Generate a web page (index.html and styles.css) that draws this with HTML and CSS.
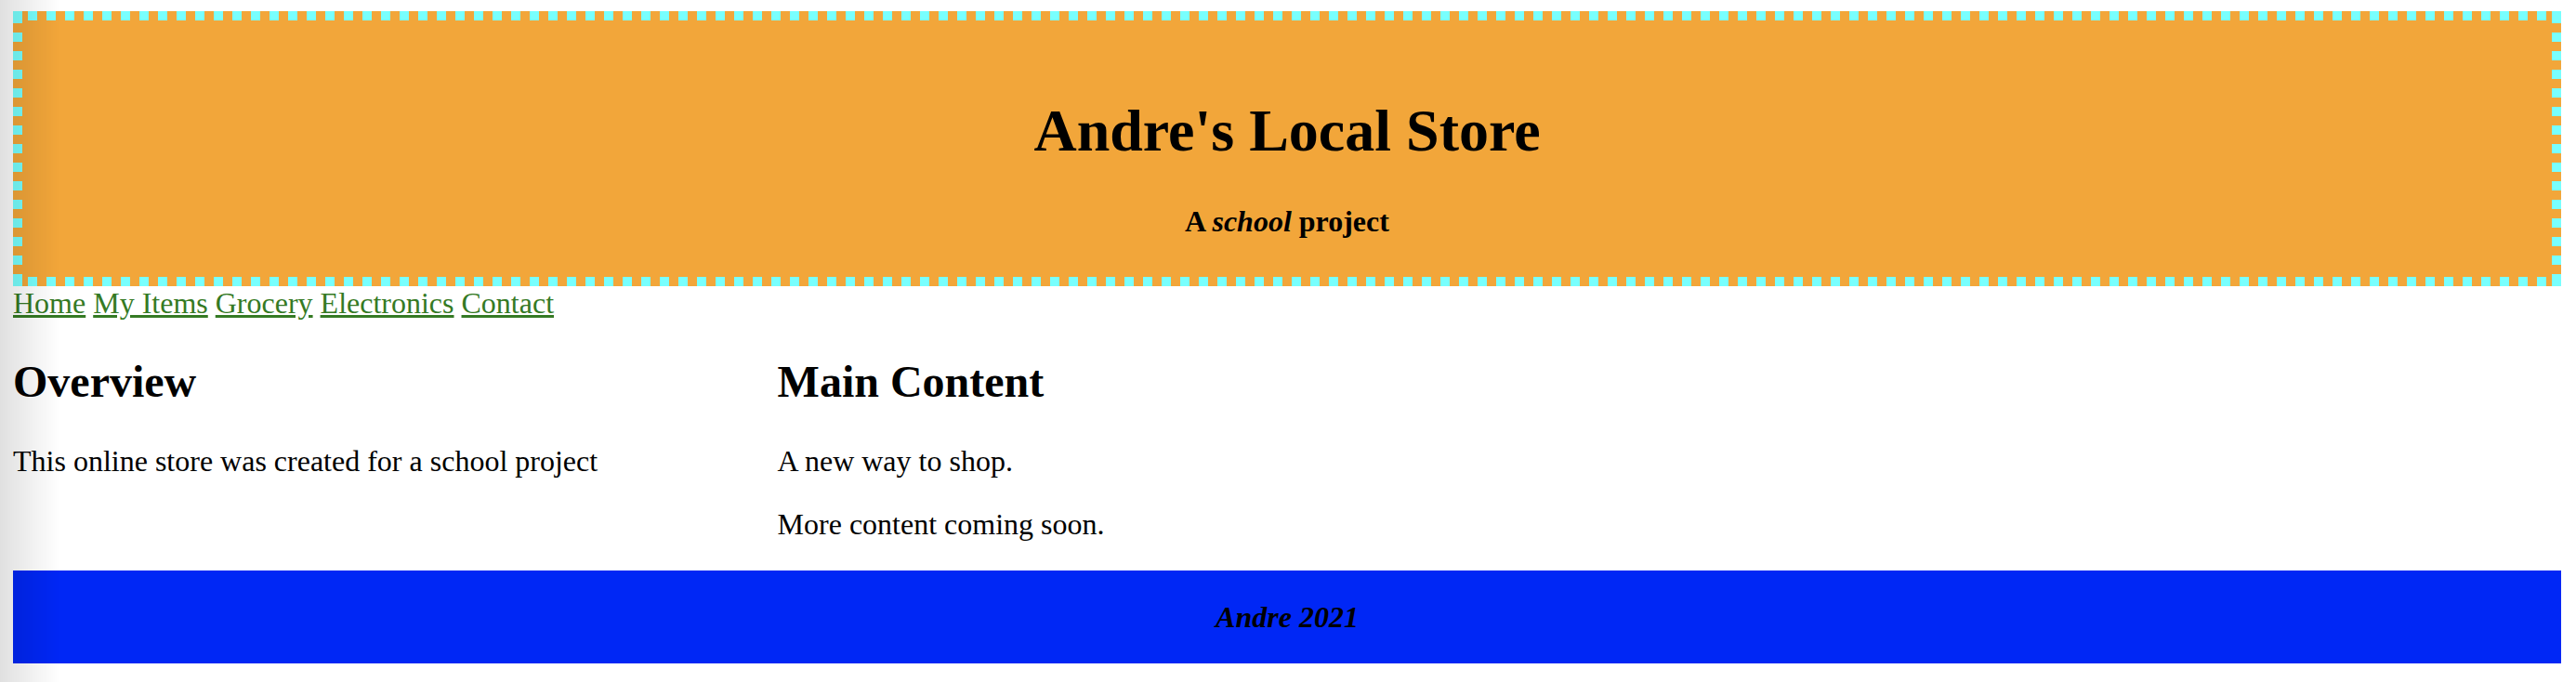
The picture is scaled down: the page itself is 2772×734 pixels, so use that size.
FILE: index.html
```html
<!DOCTYPE html>
<html lang="en">
<head>
<meta charset="utf-8">
<title>Andre's Local Store</title>
<link rel="stylesheet" href="styles.css">
</head>
<body>
<div class="shade"></div>
<header class="banner">
  <h1 class="title">Andre's Local Store</h1>
  <p class="tagline">A <em>school</em> project</p>
</header>
<nav class="nav"><a href="#">Home</a> <a href="#">My Items</a> <a href="#">Grocery</a> <a href="#">Electronics</a> <a href="#">Contact</a></nav>
<div class="columns">
  <aside class="aside">
    <h2 class="heading">Overview</h2>
    <p class="text">This online store was created for a school project</p>
  </aside>
  <main class="main">
    <h2 class="heading">Main Content</h2>
    <p class="text">A new way to shop.</p>
    <p class="text">More content coming soon.</p>
  </main>
</div>
<footer class="footer">
  <p class="credit"><em>Andre 2021</em></p>
</footer>
</body>
</html>
```
FILE: styles.css
```css
html, body {
  background: #ffffff;
}

body {
  margin: 12px 16px 0 14px;
  font-family: "Liberation Serif", "Times New Roman", serif;
  font-size: 32px;
  line-height: 1.13;
  color: #000000;
}

.shade {
  position: fixed;
  left: 0;
  top: 0;
  bottom: 0;
  width: 64px;
  background: linear-gradient(to right, rgba(0, 0, 0, 0.12), rgba(0, 0, 0, 0));
  pointer-events: none;
  z-index: 10;
}

.banner {
  border: 10px solid transparent;
  padding: 40px 0 41.76px;
  text-align: center;
  background-color: #f2a63a;
  background-image:
    linear-gradient(#78fffe, #78fffe),
    linear-gradient(#78fffe, #78fffe),
    linear-gradient(#78fffe, #78fffe),
    linear-gradient(#78fffe, #78fffe),
    repeating-linear-gradient(90deg, #78fffe 0 10px, transparent 10px 20px),
    repeating-linear-gradient(90deg, #78fffe 0 10px, transparent 10px 20px),
    repeating-linear-gradient(180deg, #78fffe 0 10px, transparent 10px 20px),
    repeating-linear-gradient(180deg, #78fffe 0 10px, transparent 10px 20px);
  background-origin: border-box;
  background-repeat: no-repeat;
  background-position:
    0 0,
    100% 0,
    0 100%,
    100% 100%,
    16px 0,
    16px 100%,
    0 23px,
    100% 23px;
  background-size:
    10px 13px,
    10px 13px,
    10px 13px,
    10px 13px,
    calc(100% - 32px) 10px,
    calc(100% - 32px) 10px,
    10px calc(100% - 46px),
    10px calc(100% - 46px);
}

.title {
  font-size: 64px;
  font-weight: bold;
  margin: 42.88px 0;
}

.tagline {
  margin: 0;
  font-weight: bold;
}

.nav a {
  color: #357a24;
  text-decoration: underline;
}

.columns {
  display: flex;
}

.aside {
  width: 30%;
}

.main {
  flex: 1;
}

.heading {
  font-size: 48px;
  font-weight: bold;
  margin: 39.84px 0;
}

.text {
  margin: 32px 0;
}

.footer {
  display: flow-root;
  background: #0027f5;
  text-align: center;
}

.credit {
  margin: 32px 0;
  font-weight: bold;
}
```
